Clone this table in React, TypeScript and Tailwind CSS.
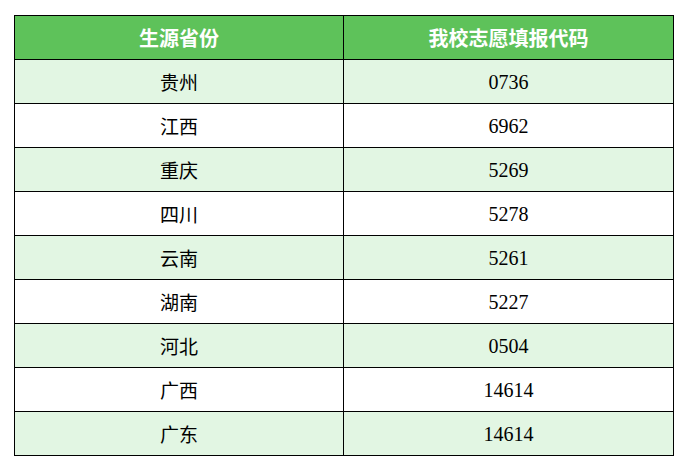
import React from 'react';

const rows: [string, string][] = [
  ['贵州', '0736'],
  ['江西', '6962'],
  ['重庆', '5269'],
  ['四川', '5278'],
  ['云南', '5261'],
  ['湖南', '5227'],
  ['河北', '0504'],
  ['广西', '14614'],
  ['广东', '14614'],
];

export default function App() {
  return (
    <div className="w-[690px] h-[468px] bg-white pt-[15px] pl-[14px]">
      <table className="border-collapse w-[660px] table-fixed">
        <thead>
          <tr className="h-[44px] bg-[#5ec25a]">
            <th className="w-[329px] border border-black text-white text-[20px] font-bold font-['Noto_Sans_CJK_SC',sans-serif] leading-none">
              生源省份
            </th>
            <th className="border border-black text-white text-[20px] font-bold font-['Noto_Sans_CJK_SC',sans-serif] leading-none">
              我校志愿填报代码
            </th>
          </tr>
        </thead>
        <tbody>
          {rows.map(([prov, code], i) => (
            <tr key={prov} className={`h-[44px] ${i % 2 === 0 ? 'bg-[#e2f6e3]' : 'bg-white'}`}>
              <td className="border border-black text-center text-[19px] text-black font-['Noto_Sans_CJK_SC',sans-serif] leading-none">
                {prov}
              </td>
              <td className="border border-black text-center text-[20px] text-black font-['Liberation_Serif',serif] leading-none">
                {code}
              </td>
            </tr>
          ))}
        </tbody>
      </table>
    </div>
  );
}
